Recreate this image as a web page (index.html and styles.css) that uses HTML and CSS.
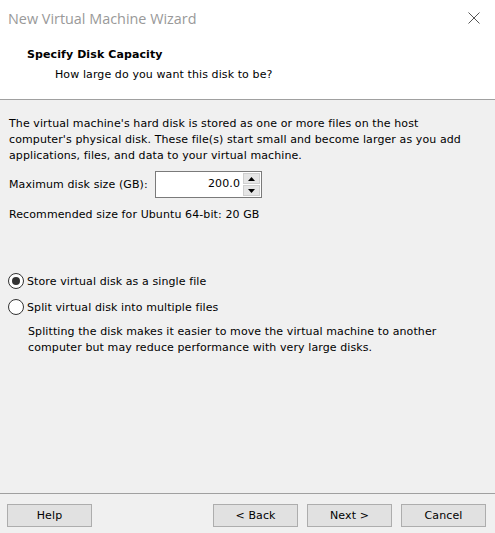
FILE: index.html
```html
<!DOCTYPE html>
<html>
<head>
<meta charset="utf-8">
<link rel="stylesheet" href="styles.css">
</head>
<body>
<div class="window">
  <div class="header">
    <div class="titlebar">
      <span class="title">New Virtual Machine Wizard</span>
      <svg class="close" width="12" height="12" viewBox="0 0 12 12"><path d="M0.5 0.5 L11.5 11.5 M11.5 0.5 L0.5 11.5" stroke="#555" stroke-width="1" fill="none"/></svg>
    </div>
    <div class="heading">Specify Disk Capacity</div>
    <div class="subheading">How large do you want this disk to be?</div>
  </div>
  <div class="content">
    <p class="intro">The virtual machine's hard disk is stored as one or more files on the host computer's physical disk. These file(s) start small and become larger as you add applications, files, and data to your virtual machine.</p>
    <div class="size-row">
      <label class="size-label">Maximum disk size (GB):</label>
      <div class="spin">
        <div class="spin-input">200.0</div>
        <div class="spin-buttons">
          <div class="spin-btn"><svg width="7" height="4" viewBox="0 0 7 4"><path d="M3.5 0 L7 4 L0 4 Z" fill="#000"/></svg></div>
          <div class="spin-btn"><svg width="7" height="4" viewBox="0 0 7 4"><path d="M0 0 L7 0 L3.5 4 Z" fill="#000"/></svg></div>
        </div>
      </div>
    </div>
    <p class="recommend">Recommended size for Ubuntu 64-bit: 20 GB</p>
    <div class="options">
      <div class="radio-row"><span class="radio checked"></span><span>Store virtual disk as a single file</span></div>
      <div class="radio-row"><span class="radio"></span><span>Split virtual disk into multiple files</span></div>
      <p class="desc">Splitting the disk makes it easier to move the virtual machine to another computer but may reduce performance with very large disks.</p>
    </div>
  </div>
  <div class="footer">
    <button class="btn">Help</button>
    <div class="spacer"></div>
    <button class="btn">&lt; Back</button>
    <button class="btn">Next &gt;</button>
    <button class="btn">Cancel</button>
  </div>
</div>
</body>
</html>
```
FILE: styles.css
```css
html, body {
  margin: 0;
  padding: 0;
  background: #f0f0f0;
}
body {
  font-family: "DejaVu Sans", sans-serif;
  font-size: 11px;
  letter-spacing: 0.1px;
  color: #000;
  width: 495px;
  height: 533px;
  overflow: hidden;
}
.window {
  display: flex;
  flex-direction: column;
  height: 533px;
}
.header {
  background: #fff;
  height: 100px;
  border-bottom: 1px solid #a0a0a0;
  box-sizing: border-box;
}
.titlebar {
  display: flex;
  justify-content: space-between;
  align-items: center;
  height: 36px;
  padding: 0 15px 0 8px;
}
.title {
  font-family: "Open Sans", sans-serif;
  font-size: 14.4px;
  letter-spacing: 0;
  color: #999;
}
.close { display: block; }
.heading {
  font-weight: bold;
  padding-left: 27px;
  margin-top: 11px;
  line-height: 15px;
}
.subheading {
  padding-left: 55px;
  margin-top: 5px;
  line-height: 15px;
}
.content {
  flex: 1;
  padding: 16px 28px 0 9px;
}
.intro {
  margin: 0;
  line-height: 16px;
}
.size-row {
  display: flex;
  align-items: center;
  margin-top: 7px;
}
.size-label { width: 146px; }
.spin {
  display: flex;
  border: 1px solid #7a7a7a;
  background: #fff;
  height: 27px;
  box-sizing: border-box;
}
.spin-input {
  width: 84px;
  text-align: right;
  line-height: 24px;
  padding-right: 2px;
}
.spin-buttons {
  display: flex;
  flex-direction: column;
  padding: 1px;
  gap: 1px;
}
.spin-btn {
  width: 17px;
  flex: 1;
  background: #e5e5e5;
  border: 1px solid #cfcfcf;
  box-sizing: border-box;
  display: flex;
  align-items: center;
  justify-content: center;
}
.recommend {
  margin: 9px 0 0 0;
  line-height: 16px;
}
.options {
  margin-top: 50px;
}
.radio-row {
  display: flex;
  align-items: center;
  gap: 3px;
  height: 16px;
  margin-bottom: 10px;
}
.radio {
  width: 16px;
  height: 16px;
  border: 1px solid #333;
  border-radius: 50%;
  background: #fff;
  box-sizing: border-box;
  position: relative;
  margin-left: -1px;
}
.radio.checked::after {
  content: "";
  position: absolute;
  left: 3px; top: 3px;
  width: 8px; height: 8px;
  border-radius: 50%;
  background: #333;
}
.desc {
  margin: -1px 0 0 19px;
  line-height: 16px;
}
.footer {
  border-top: 1px solid #a0a0a0;
  height: 40px;
  box-sizing: border-box;
  display: flex;
  align-items: flex-start;
  padding: 10px 9px 0 7px;
  gap: 9px;
}
.spacer { flex: 1; }
.btn {
  width: 85px;
  height: 23px;
  background: #e1e1e1;
  border: 1px solid #adadad;
  font-family: "DejaVu Sans", sans-serif;
  font-size: 11px;
  letter-spacing: 0.1px;
  color: #000;
  padding: 0;
}
```
